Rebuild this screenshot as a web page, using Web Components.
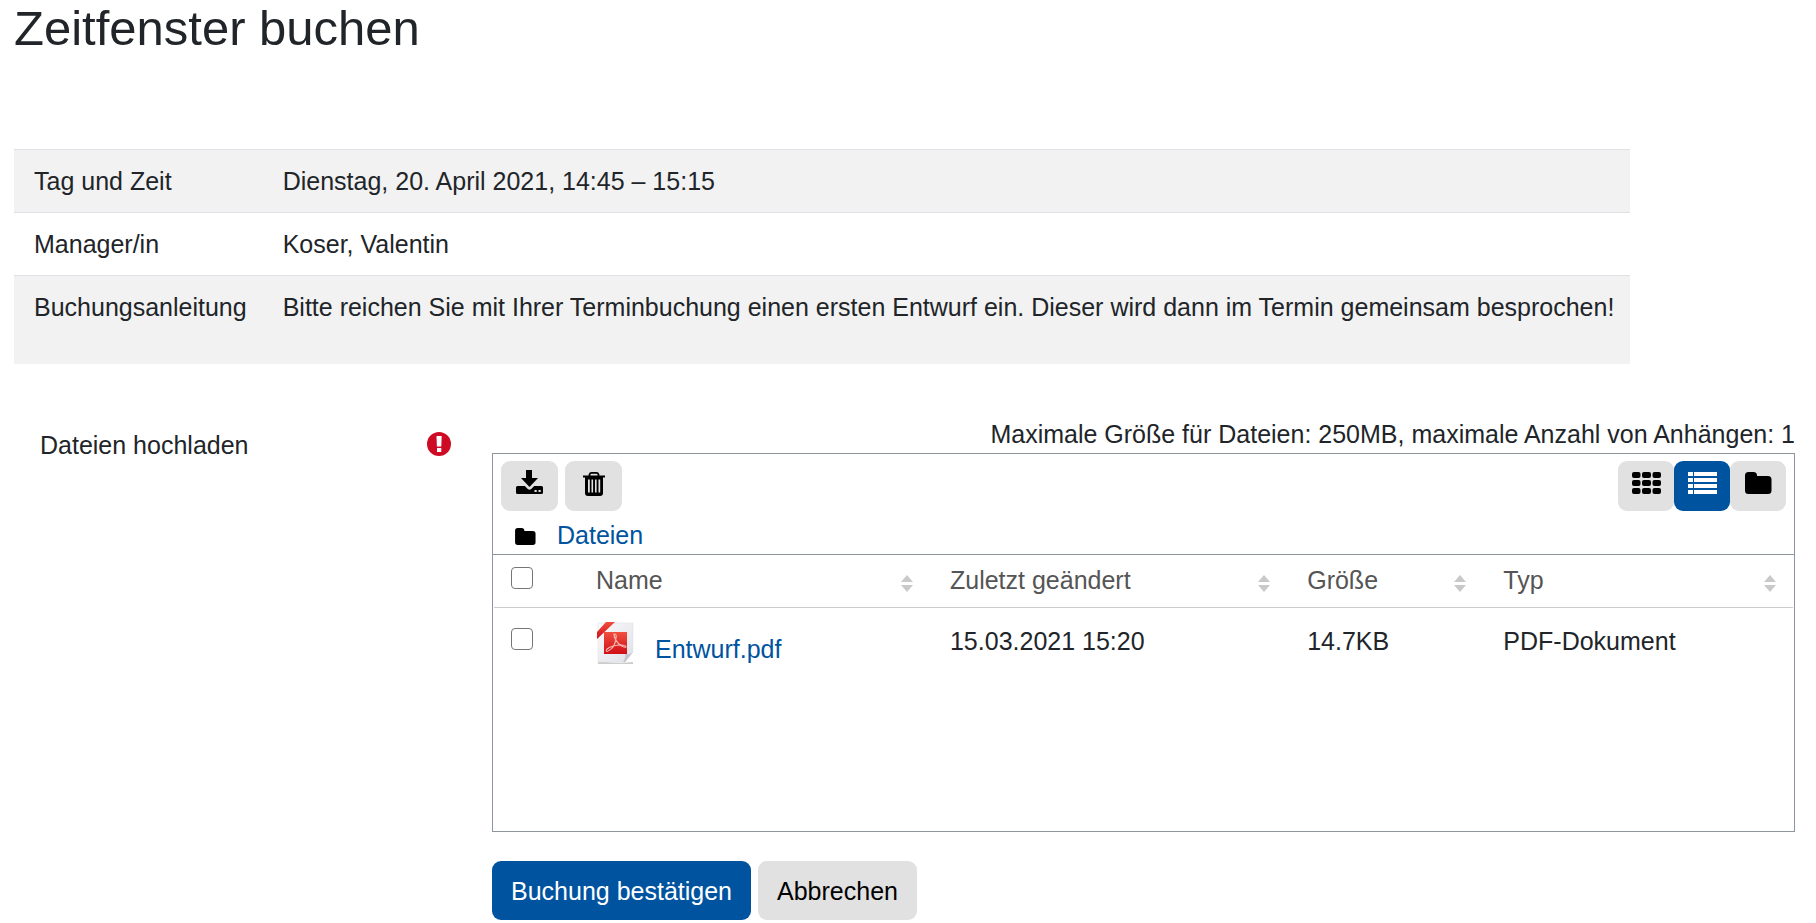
<!DOCTYPE html>
<html lang="de">
<head>
<meta charset="utf-8">
<title>Zeitfenster buchen</title>
<style>
  body {
    margin: 0;
    padding: 0 21px 0 14px;
    background: #fff;
    color: #212529;
    font: 25px/38px "Liberation Sans", Arial, sans-serif;
    --primary: #00539f;
    --muted: #e1e1e1;
  }
</style>
</head>
<body>
<booking-page></booking-page>

<template id="t-page">
  <style>
    :host { display: block; }
    h1 { margin: 0 0 93px; font-size: 49px; line-height: 56px; font-weight: 400; }
    .row { display: grid; grid-template-columns: 478px minmax(0, 1fr); margin-top: 51px; }
    .actions { display: flex; gap: 7px; margin-top: 29px; }
    .field { min-width: 0; }
    .limit { margin: 0; text-align: right; }
  </style>
  <main>
    <h1>Zeitfenster buchen</h1>
    <slot-details></slot-details>
    <form class="row">
      <field-label>Dateien hochladen</field-label>
      <div class="field">
        <p class="limit">Maximale Größe für Dateien: 250MB, maximale Anzahl von Anhängen: 1</p>
        <file-manager></file-manager>
        <div class="actions">
          <action-button kind="primary">Buchung bestätigen</action-button>
          <action-button>Abbrechen</action-button>
        </div>
      </div>
    </form>
  </main>
</template>

<template id="t-details">
  <style>
    :host { display: block; }
    table { border-collapse: separate; border-spacing: 0; }
    th, td { padding: 12px 16px 12px 20px; border-top: 1px solid #dee2e6; font-weight: 400; text-align: left; vertical-align: top; }
    tr:nth-child(odd) > * { background: #f2f2f2; }
    p { margin: 0 0 26px; }
  </style>
  <table>
    <tbody>
      <tr><th scope="row">Tag und Zeit</th><td>Dienstag, 20. April 2021, 14:45 – 15:15</td></tr>
      <tr><th scope="row">Manager/in</th><td>Koser, Valentin</td></tr>
      <tr><th scope="row">Buchungsanleitung</th><td><p>Bitte reichen Sie mit Ihrer Terminbuchung einen ersten Entwurf ein. Dieser wird dann im Termin gemeinsam besprochen!</p></td></tr>
    </tbody>
  </table>
</template>

<template id="t-label">
  <style>
    :host { display: flex; align-items: flex-start; justify-content: space-between; padding: 11px 41px 0 26px; }
    svg { display: block; margin-top: 6px; }
  </style>
  <span><slot></slot></span>
  <svg width="24" height="24" viewBox="0 0 24 24" role="img" aria-label="Erforderlich">
    <circle cx="12" cy="12" r="12" fill="#ce0b24"/>
    <path fill="#fff" d="M9.5 4h5.2L14.300 14.500H9.900ZM10 16h4.300v4H10Z"/>
  </svg>
</template>

<template id="t-action">
  <style>
    :host { display: block; }
    button { display: block; height: 59px; padding: 0 19px; border: 0; border-radius: 9px; background: var(--muted); color: #000; font: inherit; cursor: pointer; }
    :host([kind="primary"]) button { background: var(--primary); color: #fff; }
  </style>
  <button type="button"><slot></slot></button>
</template>

<template id="t-icon-button">
  <style>
    :host { display: block; }
    button { display: block; width: var(--icon-button-width, 57px); height: 50px; padding: 9px 12px 13px; border: 0; border-radius: 9px; background: var(--muted); color: #000; cursor: pointer; }
    :host([active]) button { background: var(--primary); color: #fff; }
    ::slotted(svg) { display: block; margin: auto; }
  </style>
  <button type="button"><slot></slot></button>
</template>

<template id="t-sort">
  <style>
    :host { display: block; flex: none; }
    svg { display: block; }
  </style>
  <svg width="12" height="17" viewBox="0 0 12 17" fill="#c9c9c9" aria-hidden="true"><path d="M6 0l6 7H0ZM0 10h12l-6 7Z"/></svg>
</template>

<template id="t-files">
  <style>
    :host { display: block; box-sizing: border-box; min-height: 379px; border: 1px solid #8f959e; }
    a { color: var(--primary); text-decoration: none; }
    .bar { display: flex; justify-content: space-between; padding: 7px 8px 5px; }
    .tools { display: flex; gap: 7px; }
    .views { display: flex; --icon-button-width: 56px; }
    .path { display: flex; align-items: center; gap: 21px; padding-left: 22px; border-bottom: 1px solid #8f959e; }
    .path svg { display: block; margin-top: 2px; }
    .list { padding: 0 1px; }
    table { width: 100%; table-layout: fixed; border-collapse: separate; border-spacing: 0; }
    .c0 { width: 82px; } .c1 { width: 27.25%; } .c2 { width: 27.500%; } .c3 { width: 15.100%; }
    th { padding: 6px 17px 8px 20px; border-bottom: 1px solid #ccc; font-weight: 400; color: #555; text-align: left; vertical-align: top; }
    td { padding: 14px 17px 0 20px; vertical-align: top; }
    th:first-child, td:first-child { padding-left: 17px; }
    .head { display: flex; justify-content: space-between; align-items: center; }
    .head sort-arrows { margin-top: 7px; }
    input { appearance: none; box-sizing: border-box; display: block; width: 22px; height: 22px; margin: 6px 0 0; border: 1px solid #767676; border-radius: 4px; background: #fff; }
    input:checked { background: var(--primary); }
    .file { display: flex; align-items: flex-start; gap: 21px; }
    .file a { margin-top: 8px; }
  </style>
  <div class="bar">
    <div class="tools">
      <icon-button label="Alle herunterladen">
        <svg width="27" height="28" viewBox="0 0 27 28" fill="currentColor"><path d="M10 0h6v8h6l-8.500 9L5 8h5ZM1.500 16h7.300l3 3q1.700 1.500 3.400 0l3-3h7.300q1.500 0 1.500 1.500v5q0 1.500-1.500 1.500h-24Q0 24 0 22.500v-5Q0 16 1.500 16Zm17 4v2h2.200v-2Zm4 0v2h2.200v-2Z" fill-rule="evenodd"/></svg>
      </icon-button>
      <icon-button label="Löschen">
        <svg width="22" height="28" viewBox="0 0 22 28"><path d="M6.500 6V4.500Q7 2.900 8.500 2.900h5q1.500 0 2 1.600V6" fill="none" stroke="currentColor" stroke-width="1.800"/><path d="M0 5.500h22v2h-2v15.500q0 3-3 3H5q-3 0-3-3V7.500H0ZM5 9.500v13h1.800v-13Zm3.500 0v13h1.600v-13Zm3.500 0v13h1.600v-13Zm3.500 0v13h1.700v-13Z" fill="currentColor" fill-rule="evenodd"/></svg>
      </icon-button>
    </div>
    <div class="views">
      <icon-button label="Symbole">
        <svg width="29" height="28" viewBox="0 0 29 28" fill="currentColor"><g id="r"><rect y="2" width="8.500" height="6" rx="2"/><rect x="10" y="2" width="9" height="6" rx="2"/><rect x="20.500" y="2" width="8.500" height="6" rx="2"/></g><use href="#r" y="8"/><use href="#r" y="16"/></svg>
      </icon-button>
      <icon-button label="Liste" active>
        <svg width="29" height="28" viewBox="0 0 29 28" fill="currentColor"><path d="M0 2h5v4H0ZM6 2H29v4H6ZM0 8h5v4H0ZM6 8H29v4H6ZM0 14h5v4H0ZM6 14H29v4H6ZM0 20h5v4H0ZM6 20H29v4H6Z"/></svg>
      </icon-button>
      <icon-button label="Ordner">
        <svg width="27" height="28" viewBox="0 0 27 28" fill="currentColor"><path d="M3.500 2h5q3.500 0 3.500 3.500V6h11q3.500 0 3.500 3.500v11q0 3.500-3.500 3.500H3.500Q0 24 0 20.500v-15Q0 2 3.500 2Z"/></svg>
      </icon-button>
    </div>
  </div>
  <nav class="path">
    <svg width="21" height="17" viewBox="0 2 27 22" aria-hidden="true"><path d="M3.500 2h5q3.500 0 3.500 3.500V6h11q3.500 0 3.500 3.500v11q0 3.500-3.500 3.500H3.500Q0 24 0 20.500v-15Q0 2 3.500 2Z"/></svg>
    <a href="#dateien">Dateien</a>
  </nav>
  <div class="list">
    <table>
      <colgroup><col class="c0"><col class="c1"><col class="c2"><col class="c3"><col></colgroup>
      <thead>
        <tr>
          <th><input type="checkbox" aria-label="Alle auswählen"></th>
          <th scope="col"><div class="head">Name<sort-arrows></sort-arrows></div></th>
          <th scope="col"><div class="head">Zuletzt geändert<sort-arrows></sort-arrows></div></th>
          <th scope="col"><div class="head">Größe<sort-arrows></sort-arrows></div></th>
          <th scope="col"><div class="head">Typ<sort-arrows></sort-arrows></div></th>
        </tr>
      </thead>
      <tbody>
        <tr>
          <td><input type="checkbox" aria-label="Entwurf.pdf auswählen"></td>
          <td><div class="file">
            <svg width="38" height="42" viewBox="0 0 38 42" aria-hidden="true">
              <defs>
                <linearGradient id="paper" x2="1" y2="1"><stop stop-color="#fafafa"/><stop offset="1" stop-color="#dfe0e8"/></linearGradient>
                <linearGradient id="red" x2="0" y2="1"><stop stop-color="#f0503f"/><stop offset="1" stop-color="#d00d16"/></linearGradient>
              </defs>
              <path d="M2 39q18 3 35 1v2H2Z" fill="#ccc"/>
              <path d="M2 1h35v29l-8 10H2Z" fill="url(#paper)" stroke="#e2e2e6" stroke-width=".6"/>
              <path d="M37 30q-3 3-8 2 1 4-2 8h2Z" fill="#c4c4cc"/>
              <path d="M10 0h9L1 17V10Z" fill="url(#red)"/>
              <rect x="8" y="10" width="23" height="22" fill="url(#red)"/>
              <path d="M18 12q3 0 2 4-1 10-8 13-3 1-1-2 5-4 14-4 5 0 5 2-2 1-7-3-5-5-5-10Z" fill="none" stroke="#f7b4ae" stroke-width="1.200"/>
            </svg>
            <a href="#entwurf">Entwurf.pdf</a>
          </div></td>
          <td>15.03.2021 15:20</td>
          <td>14.7KB</td>
          <td>PDF-Dokument</td>
        </tr>
      </tbody>
    </table>
  </div>
</template>

<script>
  class TemplateElement extends HTMLElement {
    constructor() {
      super();
      const root = this.attachShadow({ mode: "open" });
      root.append(document.getElementById(this.constructor.template).content.cloneNode(true));
    }
  }
  const register = (name, template) =>
    customElements.define(name, class extends TemplateElement { static template = template; });

  customElements.define("icon-button", class extends TemplateElement {
    static template = "t-icon-button";
    connectedCallback() {
      const button = this.shadowRoot.querySelector("button");
      button.setAttribute("aria-label", this.getAttribute("label"));
      button.title = this.getAttribute("label");
    }
  });
  register("action-button", "t-action");
  register("sort-arrows", "t-sort");
  register("field-label", "t-label");
  register("slot-details", "t-details");
  register("file-manager", "t-files");
  register("booking-page", "t-page");
</script>
</body>
</html>
